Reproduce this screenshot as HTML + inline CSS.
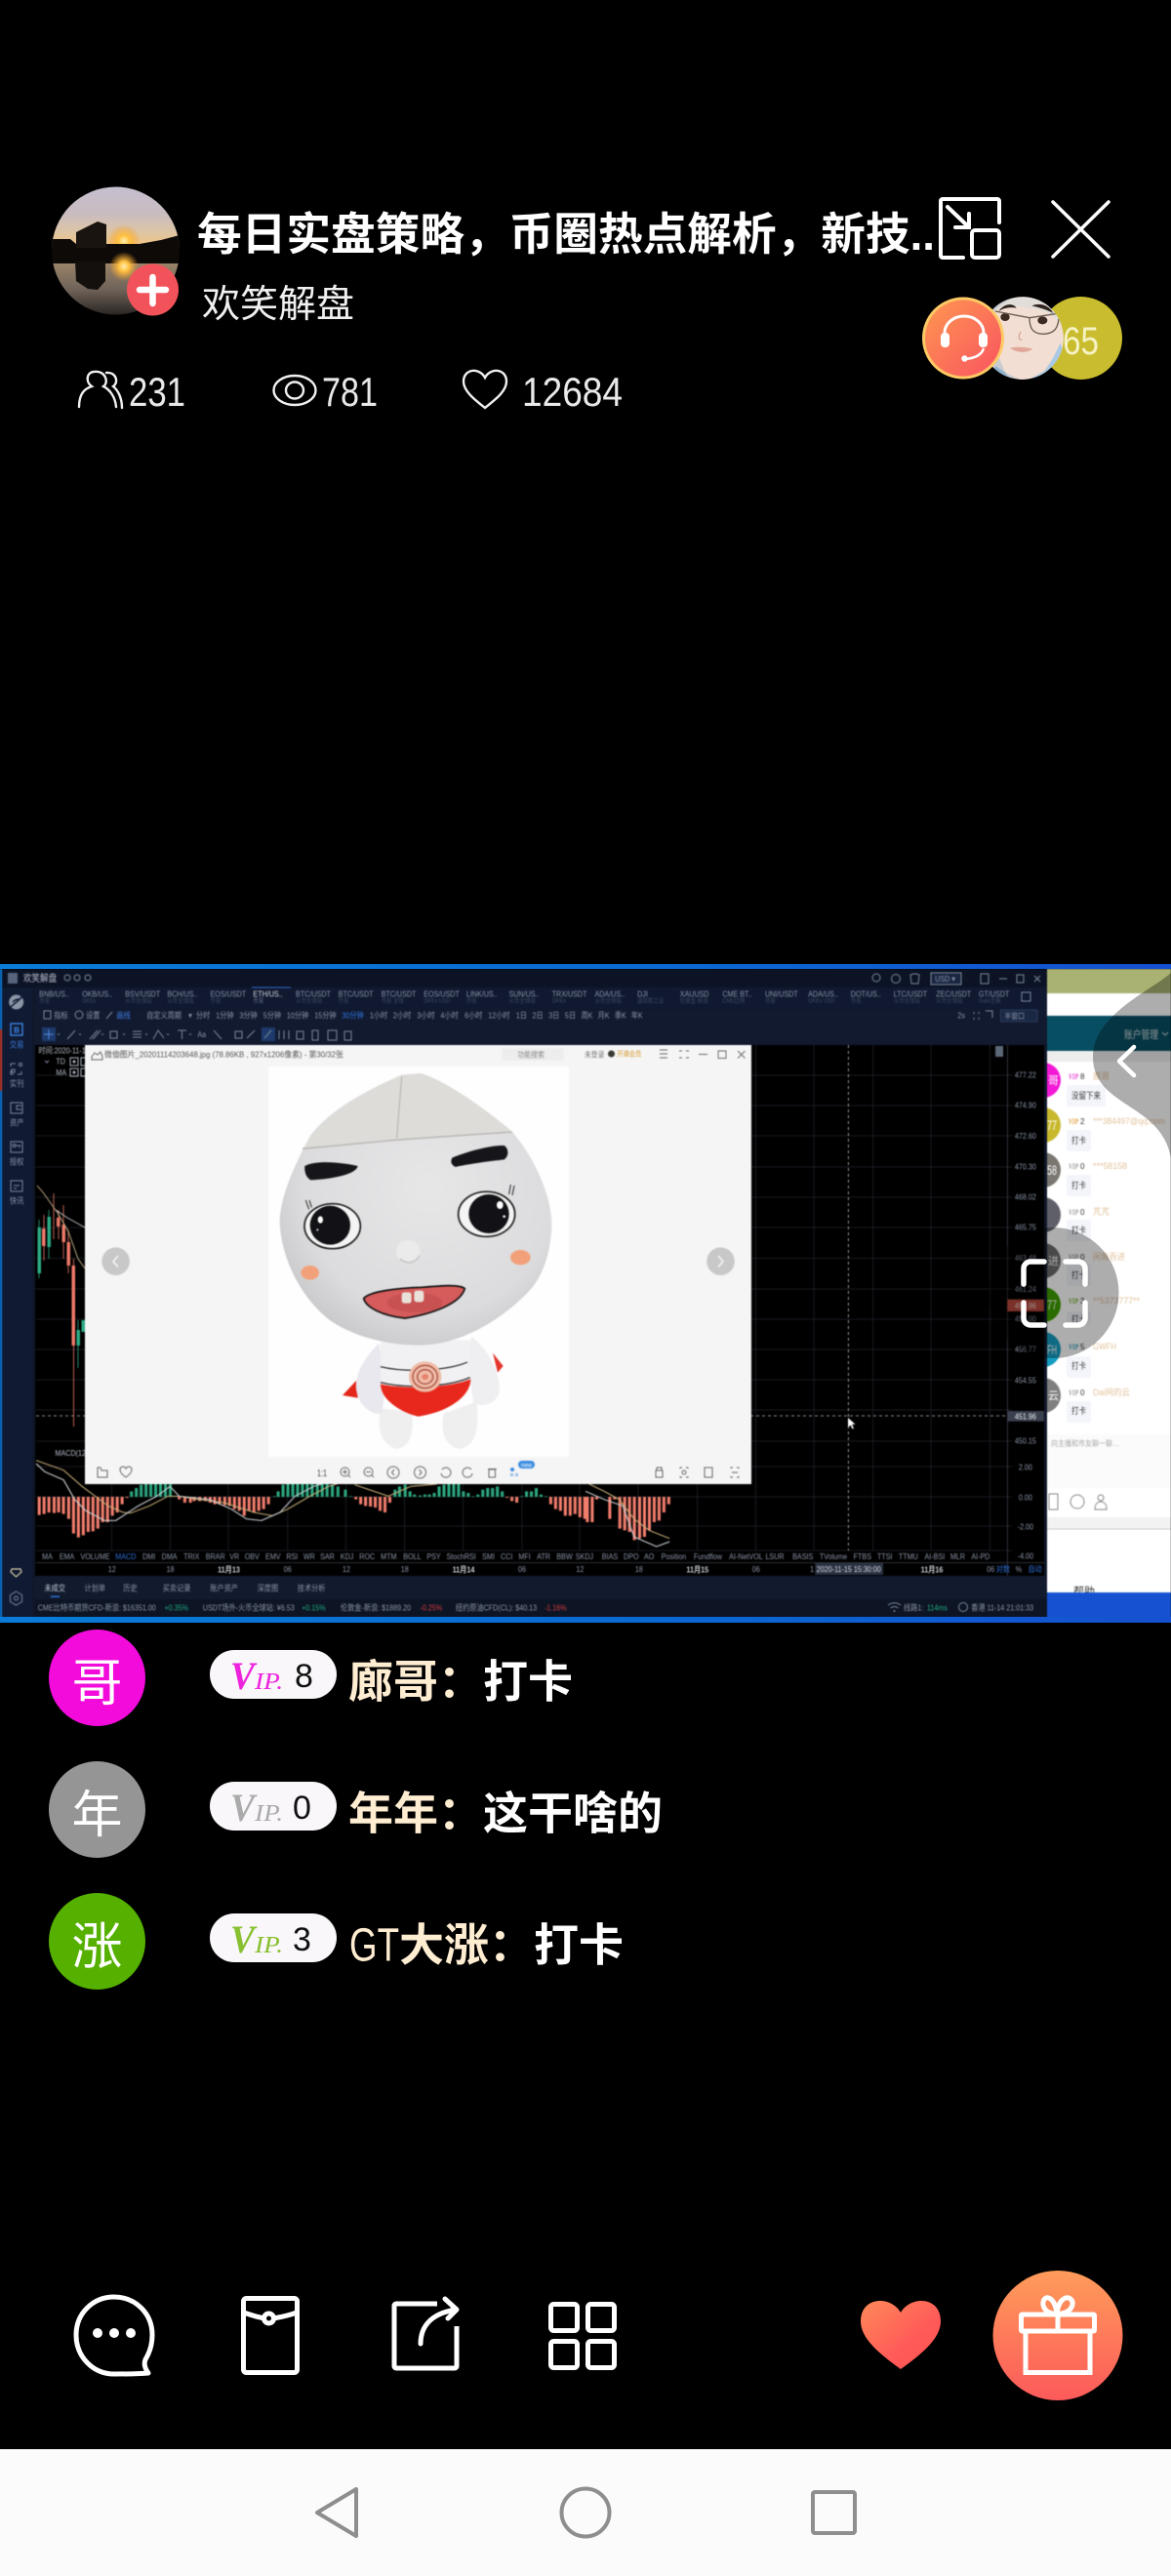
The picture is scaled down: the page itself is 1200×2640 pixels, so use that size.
<!DOCTYPE html>
<html lang="zh">
<head>
<meta charset="utf-8">
<title>欢笑解盘</title>
<style>
html,body{margin:0;padding:0;background:#000;}
body{width:1200px;height:2640px;overflow:hidden;position:relative;}
svg{position:absolute;left:0;top:0;display:block;}
text{font-family:"Liberation Sans","Noto Sans CJK SC",sans-serif;}
.sv text{font-family:"Liberation Serif","Noto Serif CJK SC",serif;font-style:italic;}
.lb text{font-size:25px;fill:#8b95a8;}
.dim text{font-size:19px;fill:#3d4a62;}
.mid text{text-anchor:middle;}
.ic{fill:none;stroke:#7d889c;stroke-width:1;}
.vi{fill:none;stroke:#666;stroke-width:1;}
.p text{font-size:9px;fill:#333;}
</style>
</head>
<body>
<svg width="1200" height="2640" viewBox="0 0 1200 2640" xmlns="http://www.w3.org/2000/svg">
<defs>
<linearGradient id="sky" x1="0" y1="0" x2="0" y2="1">
<stop offset="0" stop-color="#c5bfcf"/><stop offset=".45" stop-color="#c9bcc0"/><stop offset=".75" stop-color="#dcc5a6"/><stop offset="1" stop-color="#f2c480"/>
</linearGradient>
<linearGradient id="water" x1="0" y1="0" x2="0" y2="1">
<stop offset="0" stop-color="#9a8468"/><stop offset=".5" stop-color="#6e6258"/><stop offset="1" stop-color="#26221f"/>
</linearGradient>
<radialGradient id="sun" cx=".5" cy=".5" r=".5"><stop offset="0" stop-color="#fff0b0"/><stop offset=".35" stop-color="#ffc040"/><stop offset="1" stop-color="#f09a2a" stop-opacity="0"/></radialGradient>
<clipPath id="av"><circle cx="118.500" cy="257" r="65.500"/></clipPath>
<clipPath id="av2"><circle cx="322.500" cy="454.500" r="127"/></clipPath>
<linearGradient id="hs" x1="0" y1="0" x2="1" y2="1"><stop offset="0" stop-color="#ff9850"/><stop offset="1" stop-color="#f85360"/></linearGradient>
<linearGradient id="ht" x1="0" y1="0" x2="1" y2="1"><stop offset="0" stop-color="#ff8a58"/><stop offset=".6" stop-color="#ff5b58"/><stop offset="1" stop-color="#ff5050"/></linearGradient>
<linearGradient id="gf" x1="0" y1="0" x2="0" y2="1"><stop offset="0" stop-color="#ff9c5a"/><stop offset="1" stop-color="#fc5a5a"/></linearGradient>
<linearGradient id="bar" x1="0" y1="0" x2="1" y2="0"><stop offset="0" stop-color="#0a7cd8"/><stop offset=".55" stop-color="#0a6ad2"/><stop offset="1" stop-color="#1550d0"/></linearGradient>
<radialGradient id="head" cx=".55" cy=".42" r=".62"><stop offset="0" stop-color="#e7e7e8"/><stop offset=".75" stop-color="#dcdcde"/><stop offset="1" stop-color="#c9c9cb"/></radialGradient>
<clipPath id="panel"><rect x="1073" y="993" width="127" height="639"/></clipPath>
</defs>

<rect width="1200" height="2640" fill="#000"/>

<!-- header avatar -->
<g clip-path="url(#av)">
<rect x="53" y="191" width="131" height="62" fill="url(#sky)"/>
<circle cx="127" cy="247" r="17" fill="url(#sun)"/>
<rect x="53" y="250" width="131" height="22" fill="#0d0a08"/>
<path d="M53 245H72L78 250V256H53ZM143 250L165 246L184 241V256H143Z" fill="#0d0a08"/>
<path d="M78 238L100 227L109 230V254H78Z" fill="#19140f"/>
<rect x="53" y="270" width="131" height="54" fill="url(#water)"/>
<circle cx="127" cy="273" r="15" fill="url(#sun)"/>
<path d="M77 268H108V288L100 297L90 296L78 288Z" fill="#14100d"/>
</g>
<circle cx="156.500" cy="297" r="26.500" fill="#f2535a"/>
<path d="M143 297H170M156.500 284V311" stroke="#fff" stroke-width="6.500" stroke-linecap="round"/>

<text x="202" y="256" font-size="46" font-weight="700" fill="#fff" textLength="756" lengthAdjust="spacingAndGlyphs">每日实盘策略，币圈热点解析，新技..</text>
<text x="207" y="325" font-size="39" fill="#f0f0f0">欢笑解盘</text>

<!-- mini-window + close -->
<path d="M987 264H966a2 2 0 0 1-2-2V206a2 2 0 0 1 2-2H1022a2 2 0 0 1 2 2V228" fill="none" stroke="#fff" stroke-width="4" stroke-linecap="round"/>
<rect x="996" y="236" width="28" height="28" rx="3" fill="none" stroke="#fff" stroke-width="4"/>
<path d="M971 212L992 232M993 219V233H979" fill="none" stroke="#fff" stroke-width="4" stroke-linecap="round"/>
<path d="M1079 207L1136 263M1136 207L1079 263" stroke="#fff" stroke-width="3.500" stroke-linecap="round"/>

<!-- audience avatars -->
<circle cx="1107.500" cy="346.500" r="42.500" fill="#c9bc2e"/>
<text x="1089" y="363" font-size="40" fill="#f5f2c4" textLength="37" lengthAdjust="spacingAndGlyphs">65</text>
<g transform="translate(940,195) scale(.33333)">
<circle cx="322.500" cy="454.500" r="127" fill="#c7ccd2"/>
<g clip-path="url(#av2)">
<path d="M232 400C240 350 290 325 340 328C400 332 440 380 450 440L450 500L415 520L390 555L330 590L270 560L245 500Z" fill="#f2ded2"/>
<path d="M232 380C260 335 320 322 365 330C410 340 440 380 445 420C430 395 410 378 390 372L290 352C265 352 245 365 232 380Z" fill="#e1ded9"/>
<path d="M440 470L450 500V590H330L395 555L420 510Z" fill="#a9c9e4"/>
<path d="M240 540L270 560L290 590H230Z" fill="#8eb0ca"/>
<path d="M250 372C265 348 295 345 305 362C285 358 265 362 250 372ZM352 355C375 345 405 352 418 378C395 365 372 360 352 355Z" fill="#2e2420"/>
<ellipse cx="270" cy="390" rx="14" ry="12" fill="#3a2a22"/><ellipse cx="385" cy="400" rx="15" ry="12" fill="#3a2a22"/>
<path d="M240 372L345 392L425 380M345 392C345 425 355 440 385 442C420 442 432 425 435 395" fill="none" stroke="#6a5a4e" stroke-width="4"/>
<path d="M318 435C310 450 310 458 322 460" fill="none" stroke="#c69a85" stroke-width="3"/>
<path d="M285 485C305 480 335 482 355 488C335 502 305 500 285 485Z" fill="#e2a79a"/>
</g>
</g>
<circle cx="987" cy="346.500" r="40.500" fill="url(#hs)" stroke="#ffc965" stroke-width="3"/>
<path d="M968 344V341a20 17 0 0 1 40 0V344" fill="none" stroke="#fff" stroke-width="3"/>
<rect x="964" y="341" width="9" height="15" rx="4" fill="#fff"/><rect x="1003" y="341" width="9" height="15" rx="4" fill="#fff"/>
<path d="M1008 357C1006 364 998 367 990 368" fill="none" stroke="#fff" stroke-width="2.500"/>
<circle cx="988.500" cy="367.500" r="3.200" fill="#fff"/>

<!-- stats -->
<g fill="none" stroke="#f0f0f0" stroke-width="2.400" stroke-linecap="round">
<path d="M81 417C81 402 88 398 94 396C88 392 88 382 96 381C108 379 112 392 106 396C112 399 118 406 119 417"/>
<path d="M109 382C119 381 122 392 116 396C121 400 125 408 125 418"/>
<ellipse cx="302" cy="400" rx="21.500" ry="15"/>
<ellipse cx="302" cy="400" rx="9" ry="8.500"/>
<path d="M497 418C487 410 475 401 475 391C475 378 491 376 497 387C503 376 519 378 519 391C519 401 507 410 497 418Z"/>
</g>
<g font-size="42" fill="#e9e9e9">
<text x="132" y="416" textLength="58" lengthAdjust="spacingAndGlyphs">231</text>
<text x="330" y="416" textLength="57" lengthAdjust="spacingAndGlyphs">781</text>
<text x="535" y="416" textLength="103" lengthAdjust="spacingAndGlyphs">12684</text>
</g>

<!-- right chat panel behind video window -->
<g style="filter:blur(.4px)">
<rect x="1073" y="993" width="127" height="639" fill="#fff"/>
<rect x="1073" y="993" width="127" height="25" fill="#a9b272"/>
<rect x="1073" y="1041" width="127" height="36" fill="#084e62"/>
<rect x="1073" y="1077" width="127" height="11" fill="#ededee"/>
<text x="1152" y="1064" font-size="11" fill="#d5dde0" textLength="35" lengthAdjust="spacingAndGlyphs">账户管理</text>
<path d="M1191 1058l3 3 3-3" fill="none" stroke="#c5d0d5" stroke-width="1"/>
<g clip-path="url(#panel)" fill="#fff">
<circle cx="1069" cy="1107" r="18" fill="#f318d6"/>
<circle cx="1069" cy="1153" r="18" fill="#c8b82c"/>
<circle cx="1069" cy="1199" r="18" fill="#7a7670"/>
<circle cx="1069" cy="1245" r="18" fill="#5e5f68"/>
<circle cx="1069" cy="1292" r="18" fill="#6c6c6c"/>
<circle cx="1069" cy="1337" r="18" fill="#3ea000"/>
<circle cx="1069" cy="1383" r="18" fill="#169cc0"/>
<circle cx="1069" cy="1430" r="18" fill="#7f7f7f"/>
<g font-size="11"><text x="1074" y="1111">哥</text><text x="1074" y="1296">进</text><text x="1074" y="1434">云</text></g>
<g font-size="14"><text x="1073" y="1158" textLength="10" lengthAdjust="spacingAndGlyphs">77</text><text x="1073" y="1204" textLength="10" lengthAdjust="spacingAndGlyphs">58</text><text x="1073" y="1342" textLength="10" lengthAdjust="spacingAndGlyphs">77</text><text x="1073" y="1388" textLength="10" lengthAdjust="spacingAndGlyphs">FH</text></g>
</g>
<g fill="#f3f5fb">
<rect x="1093" y="1112" width="40" height="22" rx="2"/><rect x="1093" y="1158" width="25" height="22" rx="2"/><rect x="1093" y="1204" width="25" height="22" rx="2"/><rect x="1093" y="1250" width="25" height="22" rx="2"/><rect x="1093" y="1296" width="25" height="22" rx="2"/><rect x="1093" y="1344" width="25" height="14" rx="2"/><rect x="1093" y="1390" width="25" height="22" rx="2"/><rect x="1093" y="1436" width="25" height="22" rx="2"/>
</g>
<g class="p">
<text x="1098" y="1126" textLength="30" lengthAdjust="spacingAndGlyphs">没留下来</text>
<text x="1098" y="1172" textLength="15" lengthAdjust="spacingAndGlyphs">打卡</text>
<text x="1098" y="1218" textLength="15" lengthAdjust="spacingAndGlyphs">打卡</text>
<text x="1098" y="1264" textLength="15" lengthAdjust="spacingAndGlyphs">打卡</text>
<text x="1098" y="1310" textLength="15" lengthAdjust="spacingAndGlyphs">打卡</text>
<text x="1098" y="1355" textLength="15" lengthAdjust="spacingAndGlyphs">打卡</text>
<text x="1098" y="1403" textLength="15" lengthAdjust="spacingAndGlyphs">打卡</text>
<text x="1098" y="1449" textLength="15" lengthAdjust="spacingAndGlyphs">打卡</text>
</g>
<g font-size="9" fill="#e3c39c">
<text x="1120" y="1106" textLength="17" lengthAdjust="spacingAndGlyphs">廊哥</text>
<text x="1120" y="1152" textLength="74" lengthAdjust="spacingAndGlyphs">***384497@qq.com</text>
<text x="1120" y="1198" textLength="35" lengthAdjust="spacingAndGlyphs">***58158</text>
<text x="1120" y="1245" textLength="17" lengthAdjust="spacingAndGlyphs">芃芃</text>
<text x="1120" y="1291" textLength="33" lengthAdjust="spacingAndGlyphs">闲角吞进</text>
<text x="1120" y="1336" textLength="48" lengthAdjust="spacingAndGlyphs">**5373777**</text>
<text x="1120" y="1383" textLength="24" lengthAdjust="spacingAndGlyphs">GWFH</text>
<text x="1120" y="1430" textLength="38" lengthAdjust="spacingAndGlyphs">Dai网的云</text>
</g>
<g class="sv" font-weight="700">
<text x="1095" y="1106" font-size="8" fill="#e83fd0" textLength="10" lengthAdjust="spacingAndGlyphs">VIP</text><text x="1095" y="1152" font-size="8" fill="#e0a040" textLength="10" lengthAdjust="spacingAndGlyphs">VIP</text><text x="1095" y="1198" font-size="8" fill="#999" textLength="10" lengthAdjust="spacingAndGlyphs">VIP</text><text x="1095" y="1245" font-size="8" fill="#999" textLength="10" lengthAdjust="spacingAndGlyphs">VIP</text><text x="1095" y="1291" font-size="8" fill="#999" textLength="10" lengthAdjust="spacingAndGlyphs">VIP</text><text x="1095" y="1336" font-size="8" fill="#7ab030" textLength="10" lengthAdjust="spacingAndGlyphs">VIP</text><text x="1095" y="1383" font-size="8" fill="#30a0c0" textLength="10" lengthAdjust="spacingAndGlyphs">VIP</text><text x="1095" y="1430" font-size="8" fill="#999" textLength="10" lengthAdjust="spacingAndGlyphs">VIP</text>
</g>
<g font-size="8" fill="#333">
<text x="1107" y="1106">8</text><text x="1107" y="1152">2</text><text x="1107" y="1198">0</text><text x="1107" y="1245">0</text><text x="1107" y="1291">0</text><text x="1107" y="1336">3</text><text x="1107" y="1383">5</text><text x="1107" y="1430">0</text>
</g>
<rect x="1073" y="1470" width="127" height="55" fill="#fbfbfb"/>
<text x="1077" y="1482" font-size="8" fill="#aaa" textLength="70" lengthAdjust="spacingAndGlyphs">向主播和市友聊一聊…</text>
<rect x="1075" y="1531" width="9" height="16" fill="none" stroke="#888"/>
<circle cx="1104" cy="1539" r="7" fill="none" stroke="#888"/>
<circle cx="1128" cy="1535" r="3" fill="none" stroke="#888"/>
<path d="M1122 1547c0-6 3-8 6-8s6 2 6 8z" fill="none" stroke="#888"/>
<rect x="1073" y="1555" width="127" height="12" fill="#f2f2f2"/>
<rect x="1073" y="1566.500" width="127" height="1" fill="#ccc"/>
<g clip-path="url(#panel)"><text x="1100" y="1635" font-size="11.500" fill="#333" textLength="22" lengthAdjust="spacingAndGlyphs">帮助</text></g>
<rect x="1073" y="1632" width="127" height="26" fill="#1452d2"/>

<!-- video window -->
<rect x="0" y="993" width="1073" height="665" fill="#0f1729"/>
<rect x="2" y="993" width="31" height="665" fill="#101a33"/>
<rect x="2" y="993" width="1071" height="19" fill="#0c1325"/>
<rect x="36" y="1012" width="1037" height="24" fill="#101930"/>
<rect x="36" y="1036" width="1037" height="35" fill="#121a30"/>
<rect x="36" y="1071" width="1034" height="544" fill="#000"/>
<rect x="36" y="1615" width="1037" height="24" fill="#121a2e"/>
<rect x="36" y="1639" width="1037" height="19" fill="#0d1424"/>
<rect x="0" y="993" width="2" height="665" fill="#0a78d8"/>
<rect x="0" y="1055" width="2" height="63" fill="#c0392b"/>

<!-- grid -->
<path d="M37 1102H1037M37 1133H1037M37 1164H1037M37 1196H1037M37 1227H1037M37 1258H1037M37 1289.500H1037M37 1321H1037M37 1352H1037M37 1383H1037M37 1414H1037M37 1445H1037M37 1477H1037M37 1503H1037M37 1534H1037M37 1564H1037M37 1589H1037" stroke="#23262e" stroke-width=".8"/>
<path d="M114.400 1071V1589M174.500 1071V1589M234 1071V1589M294.700 1071V1589M354.400 1071V1589M414.500 1071V1589M474.500 1071V1589M535 1071V1589M594 1071V1589M654 1071V1589M714.400 1071V1589M774.500 1071V1589M834 1071V1589M894.700 1071V1589M954 1071V1589M1014.500 1071V1589" stroke="#1f2229" stroke-width=".8"/>
<path d="M1032.500 1071V1615" stroke="#3a3f4a" stroke-width=".8"/>
<path d="M37 1601.600H1070" stroke="#3a3f4a" stroke-width=".8"/>
<path d="M869.400 1071V1589M37 1451H1032" stroke="#bbb" stroke-width=".8" stroke-dasharray="3 3"/>

<!-- candles -->
<g fill="#f07a6a" stroke="#f07a6a">
<path d="M45 1245V1292M55 1223V1270M60 1240V1270M65 1235V1290M70 1260V1305M75.500 1290V1462" stroke-width=".8" fill="none"/>
<rect x="43" y="1259" width="3.500" height="18" stroke="none"/><rect x="58" y="1248" width="3.500" height="9" stroke="none"/><rect x="63.500" y="1255" width="3.500" height="18" stroke="none"/><rect x="68.500" y="1273" width="3.500" height="24" stroke="none"/><rect x="73.500" y="1297" width="3.500" height="82" stroke="none"/>
</g>
<g fill="#2cab85" stroke="#2cab85">
<path d="M40 1250V1310M50 1240V1290M80 1353V1402" stroke-width=".8" fill="none"/>
<rect x="38.500" y="1258" width="3.500" height="47" stroke="none"/><rect x="48.500" y="1247" width="3.500" height="31" stroke="none"/><rect x="78.500" y="1363" width="3.500" height="16" stroke="none"/><rect x="83.500" y="1353" width="3.500" height="12" stroke="none"/>
</g>
<path d="M38 1215L44 1222L59 1243L70 1262L80 1290L87 1300" fill="none" stroke="#c8b48a" stroke-width=".9"/>
<path d="M57 1240L69 1248L87 1258" fill="none" stroke="#c8ccd2" stroke-width=".8"/>

<!-- MACD bars -->
<g transform="translate(0,1320) scale(.38265,.33333)" fill="none" stroke-width="8">
<path stroke="#f47e6e" d="M105 642V698M118 642V695M131 642V690M145 642V692M157 642V690M170 642V695M184 642V710M197 642V755M210 642V767M223 642V760M236 642V750M249 642V748M262 642V740M275 642V720M288 642V720M301 642V700M314 642V690M327 642V665M340 642V645M480 642V650M495 642V660M510 642V660M520 642V655M535 642V655M550 642V655M563 642V660M575 642V665M588 642V665M602 642V668M615 642V670M628 642V680M641 642V685M654 642V700M667 642V685M680 642V690M693 642V685M706 642V680M719 642V665M953 642V650M966 642V665M979 642V670M992 642V672M1005 642V675M1018 642V685M1031 642V690M1044 642V660M1358 642V645M1371 642V655M1384 642V660M1475 642V665M1488 642V680M1501 642V685M1514 642V700M1527 642V700M1540 642V695M1553 642V705M1566 642V710"/>
<path stroke="#2ca880" d="M352 642V625M365 642V615M378 642V605M391 642V603M404 642V603M417 642V603M430 642V603M443 642V603M456 642V603M735 642V640M745 642V625M758 642V605M771 642V603M784 642V603M797 642V603M810 642V603M823 642V603M836 642V603M850 642V603M863 642V603M876 642V603M890 642V605M905 642V610M925 642V620M940 642V640M1058 642V620M1070 642V610M1085 642V605M1098 642V625M1110 642V635M1125 642V638M1138 642V635M1150 642V635M1163 642V630M1176 642V610M1189 642V605M1202 642V603M1215 642V603M1228 642V603M1241 642V625M1254 642V630M1267 642V640M1280 642V635M1293 642V620M1306 642V615M1319 642V615M1332 642V610M1345 642V625M1397 642V640M1410 642V625M1423 642V625M1436 642V615M1449 642V635M1462 642V640"/>
<path stroke="#c9b078" stroke-width="3" d="M97 530L170 560L220 610L290 670L330 690L350 692L400 670L450 640L480 640L530 650L600 660L680 690L730 700L770 680L830 640L880 610L910 600M950 605L1040 640L1100 610L1170 603"/>
<path stroke="#cfd3d8" stroke-width="3" d="M97 540L120 565L170 590L200 650L230 685L280 715L310 715L370 670L420 640L455 610L480 640L560 650L620 680L660 710L700 715L750 690L790 640L840 610L870 600"/>
</g>
<g transform="translate(600,1320) scale(.38265,.33333)" fill="none" stroke-width="8">
<path stroke="#f47e6e" d="M5 642V720M18 642V720M30 642V650M65 642V710M78 642V650M92 642V740M105 642V745M118 642V750M131 642V775M145 642V770M158 642V765M171 642V745M184 642V720M197 642V715M210 642V690M223 642V665"/>
<path stroke="#c9b078" stroke-width="3" d="M10 603L50 625L90 650L130 710L170 745L225 770"/>
<path stroke="#cfd3d8" stroke-width="3" d="M0 625L50 650L100 670L130 765L190 795L225 780"/>
</g>

<!-- sidebar icons -->
<circle cx="16.700" cy="1027" r="7.500" fill="#8d96a8"/><path d="M11 1032C15 1028 19 1026 23 1021M13 1027C16 1024 18 1024 20 1024" stroke="#101a33" stroke-width="1.500" fill="none"/>
<rect x="11" y="1049" width="12" height="12" fill="none" stroke="#3e8bf0" stroke-width="1.300"/>
<text x="17" y="1058.500" font-size="8" font-weight="700" fill="#3e8bf0" text-anchor="middle">B</text>
<g class="ic" stroke-width="1.200">
<path d="M11 1093v-3h5M11 1097v4h3M22 1098v3h-4"/><circle cx="21" cy="1091" r="1.500"/><rect x="12" y="1096" width="3" height="3"/>
<rect x="11" y="1130" width="12" height="11"/><path d="M22 1133h-5v4h5"/>
<rect x="11" y="1170" width="12" height="11"/><circle cx="14.500" cy="1174" r="1.500"/><path d="M16 1174h5M20 1174v2"/>
<rect x="11" y="1210" width="12" height="11"/><path d="M14 1215h6M14 1218h3"/>
</g>
<path d="M12 1608h9l1 3-5.500 5-5.500-5z" fill="none" stroke="#d7c9a8" stroke-width="1.200"/>
<path d="M16.500 1631l6 3.500v7l-6 3.500-6-3.500v-7z" class="ic"/><circle cx="16.500" cy="1638" r="2" class="ic"/>

<!-- toolbar glyphs -->
<rect x="43" y="1053" width="14" height="14" fill="#1e3a6c"/>
<rect x="268" y="1053" width="14" height="14" fill="#1e3a6c"/>
<path d="M50 1055V1065M45 1060H55" stroke="#4f8de0" stroke-width="1"/>
<path d="M58.500 1059.500h3l-1.500 1.500zM80.500 1059.500h3l-1.500 1.500zM103.500 1059.500h3l-1.500 1.500zM125.500 1059.500h3l-1.500 1.500zM148.500 1059.500h3l-1.500 1.500zM170.500 1059.500h3l-1.500 1.500zM193.500 1059.500h3l-1.500 1.500z" fill="#7d889c"/>
<g class="ic">
<path d="M69 1065L77 1056M92 1065L100 1056M95 1065L103 1056"/><rect x="113" y="1057" width="7" height="7"/><path d="M136 1057H145M136 1060H145M136 1063H145M157 1065L162 1056L168 1064M182 1056H191M186.500 1056V1065"/>
<path d="M219 1056L227 1065M241 1057h7v7h-7zM253 1064l8-8M271 1064l7-8"/><path d="M286 1056v9M291 1056v9M296 1056v9"/><rect x="304" y="1057" width="7" height="8"/><rect x="320" y="1056" width="6" height="10"/><rect x="336" y="1056" width="9" height="10"/><rect x="353" y="1057" width="7" height="9"/>
<rect x="45" y="1036" width="7" height="8"/><circle cx="81" cy="1040" r="4"/><path d="M109 1044l6-7"/>
<circle cx="898" cy="1002" r="4"/><circle cx="918" cy="1003" r="4.500"/><path d="M933 999l3-1h3l3 1-1 9h-7z"/><rect x="954" y="997" width="31" height="12" fill="#1a2640"/><rect x="1005" y="998" width="8" height="10"/><path d="M1024 1003H1032"/><rect x="1042" y="999" width="7" height="8"/><path d="M1060 1000l6 6M1066 1000l-6 6"/>
<rect x="1025.500" y="1035" width="37.500" height="12" fill="#1a2844" stroke="#2a3a5a"/><path d="M998 1037v2M1003 1037v2M998 1043v2M1003 1043v2M1010 1036h7v7"/>
<rect x="1047" y="1017" width="9" height="9"/>
<rect x="8" y="997" width="10" height="11" fill="#58647c" stroke="none"/>
<circle cx="69" cy="1002" r="3"/><circle cx="79" cy="1002" r="3"/><circle cx="90" cy="1002" r="3"/>
</g>
<path d="M258 1012H298" stroke="#2e6bd0" stroke-width="1"/>
<path d="M46 1087l2 2 2-2" class="ic"/>
<g fill="none" stroke="#aab0bb" stroke-width="1"><rect x="72" y="1084" width="8" height="8"/><rect x="72" y="1095" width="8" height="8"/><rect x="83" y="1084" width="5" height="8"/><rect x="83" y="1095" width="5" height="8"/></g>
<circle cx="76" cy="1088" r="1.500" fill="#aab0bb"/><circle cx="76" cy="1099" r="1.500" fill="#aab0bb"/>

<!-- text labels in video -->
<g transform="translate(0,980) scale(.28699,.33333)">
<text x="83" y="78" font-size="30" fill="#b9c2d0">欢笑解盘</text>
<g class="lb">
<text x="140" y="124">BNB/US..</text><text x="293" y="124">OKB/US..</text><text x="447" y="124">BSV/USDT</text><text x="597" y="124">BCH/US..</text><text x="751" y="124">EOS/USDT</text><text x="904" y="124" style="fill:#d7dce4">ETH/US..</text><text x="1056" y="124">BTC/USDT</text><text x="1208" y="124">BTC/USDT</text><text x="1361" y="124">BTC/USDT</text><text x="1513" y="124">EOS/USDT</text><text x="1665" y="124">LINK/US..</text><text x="1817" y="124">SUN/US..</text><text x="1971" y="124">TRX/USDT</text>
<text x="193" y="190">指标</text><text x="307" y="190">设置</text><text x="416" y="190" style="fill:#3e7fe0">画线</text><text x="523" y="190">自定义周期</text><text x="673" y="190">▾</text><text x="700" y="190">分时</text><text x="771" y="190">1分钟</text><text x="855" y="190">3分钟</text><text x="940" y="190">5分钟</text><text x="1024" y="190">10分钟</text><text x="1123" y="190">15分钟</text><text x="1221" y="190" style="fill:#2f74e0">30分钟</text><text x="1320" y="190">1小时</text><text x="1404" y="190">2小时</text><text x="1489" y="190">3小时</text><text x="1573" y="190">4小时</text><text x="1659" y="190">6小时</text><text x="1743" y="190">12小时</text><text x="1843" y="190">1日</text><text x="1901" y="190">2日</text><text x="1959" y="190">3日</text><text x="2017" y="190">5日</text><text x="2075" y="190">周K</text>
<text x="705" y="249">Aa</text>
<text x="137" y="298" style="fill:#b6bcc8">时间:2020-11-1</text><text x="200" y="332" style="fill:#b6bcc8">TD</text><text x="200" y="366" style="fill:#b6bcc8">MA</text>
</g>
<g class="dim">
<text x="140" y="142">币安</text><text x="293" y="142">OKEx</text><text x="447" y="142">火币全球站</text><text x="597" y="142">火币全球站</text><text x="751" y="142">币安</text><text x="904" y="142" style="fill:#66718a">币安</text><text x="1056" y="142">火币全球站</text><text x="1208" y="142">币安</text><text x="1361" y="142">币安 全球</text><text x="1513" y="142">OKEx USD</text><text x="1665" y="142">币安</text><text x="1817" y="142">火币全球站</text><text x="1971" y="142">OKEx</text>
</g>
<g class="lb mid">
<text x="60" y="280" style="fill:#3d7fe0;font-size:25px">交易</text><text x="60" y="400">实刊</text><text x="60" y="520">资产</text><text x="60" y="640">授权</text><text x="60" y="760">快讯</text>
</g>
</g>
<g transform="translate(600,980) scale(.28699,.33333)">
<g class="lb">
<text x="33" y="124">ADA/US..</text><text x="185" y="124">DJI</text><text x="337" y="124">XAUUSD</text><text x="489" y="124">CME BT..</text><text x="641" y="124">UNI/USDT</text><text x="795" y="124">ADA/US..</text><text x="947" y="124">DOT/US..</text><text x="1100" y="124">LTC/USDT</text><text x="1252" y="124">ZEC/USDT</text><text x="1404" y="124">GT/USDT</text>
<text x="44" y="190">月K</text><text x="104" y="190">季K</text><text x="163" y="190">年K</text><text x="1329" y="190">2s</text><text x="1496" y="192" style="font-size:24px">半窗口</text><text x="1248" y="78">USD ▾</text>
</g>
<g class="dim">
<text x="33" y="142">火币全球站</text><text x="185" y="142">道琼斯工业</text><text x="337" y="142">伦敦金-新浪</text><text x="489" y="142">CME比特</text><text x="641" y="142">币安</text><text x="795" y="142">OKEx USD</text><text x="947" y="142">币安</text><text x="1100" y="142">火币全球站</text><text x="1252" y="142">火币全球站</text><text x="1404" y="142">Gate芝麻</text>
</g>
<g class="lb mid">
<text x="1571" y="373">477.22</text><text x="1571" y="467">474.90</text><text x="1571" y="561">472.60</text><text x="1571" y="655">470.30</text><text x="1571" y="748">468.02</text><text x="1571" y="842">465.75</text><text x="1571" y="936">463.48</text>
</g>
</g>
<g transform="translate(0,1320) scale(.28699,.33333)">
<text x="197" y="516" font-size="25" fill="#b6bcc8">MACD(12</text>
<g class="lb mid">
<text x="169" y="834">MA</text><text x="239" y="834">EMA</text><text x="340" y="834">VOLUME</text><text x="449" y="834" style="fill:#2f6fd8">MACD</text><text x="532" y="834">DMI</text><text x="605" y="834">DMA</text><text x="684" y="834">TRIX</text><text x="769" y="834">BRAR</text><text x="837" y="834">VR</text><text x="900" y="834">OBV</text><text x="975" y="834">EMV</text><text x="1043" y="834">RSI</text><text x="1104" y="834">WR</text><text x="1169" y="834">SAR</text><text x="1239" y="834">KDJ</text><text x="1311" y="834">ROC</text><text x="1388" y="834">MTM</text><text x="1472" y="834">BOLL</text><text x="1549" y="834">PSY</text><text x="1647" y="834">StochRSI</text><text x="1744" y="834">SMI</text><text x="1809" y="834">CCI</text><text x="1873" y="834">MFI</text><text x="1941" y="834">ATR</text><text x="2016" y="834">BBW</text><text x="2087" y="834">SKDJ</text>
<text x="400" y="873">12</text><text x="608" y="873">18</text><text x="817" y="874" style="fill:#c9cdd4;font-weight:700">11月13</text><text x="1027" y="873">06</text><text x="1237" y="873">12</text><text x="1445" y="873">18</text><text x="1655" y="874" style="fill:#c9cdd4;font-weight:700">11月14</text><text x="1864" y="873">06</text><text x="2071" y="873">12</text>
<text x="196" y="931" style="fill:#c5cbd6">未成交</text><text x="339" y="931">计划单</text><text x="465" y="931">历史</text><text x="631" y="931">买卖记录</text><text x="800" y="931">账户资产</text><text x="956" y="931">深度图</text><text x="1112" y="931">技术分析</text>
</g>
<g class="lb" style="font-size:24px">
<text x="135" y="991">CME比特币期货CFD-新浪: $16351.00</text><text x="587" y="991" style="fill:#1fa97d">+0.35%</text><text x="724" y="991">USDT场外-火币全球站: ¥6.53</text><text x="1077" y="991" style="fill:#1fa97d">+0.15%</text><text x="1216" y="991">伦敦金-新浪: $1889.20</text><text x="1500" y="991" style="fill:#d63b3b">-0.25%</text><text x="1627" y="991">纽约原油CFD(CL): $40.13</text><text x="1944" y="991" style="fill:#d63b3b">-1.16%</text>
</g>
</g>
<rect x="52" y="1635.500" width="9" height="1.500" fill="#2e72d8"/>
<g transform="translate(600,1320) scale(.28699,.33333)">
<rect x="820" y="846" width="243" height="36" fill="#2a3140"/>
<rect x="1506" y="35" width="131" height="37" fill="#b5473c"/>
<rect x="1506" y="378" width="131" height="32" fill="#3a404e"/>
<g class="lb mid">
<text x="87" y="834">BIAS</text><text x="163" y="834">DPO</text><text x="227" y="834">AO</text><text x="315" y="834">Position</text><text x="437" y="834">Fundflow</text><text x="573" y="834">AI-NetVOL</text><text x="676" y="834">LSUR</text><text x="776" y="834">BASIS</text><text x="885" y="834">TVolume</text><text x="989" y="834">FTBS</text><text x="1069" y="834">TTSI</text><text x="1153" y="834">TTMU</text><text x="1247" y="834">AI-BSI</text><text x="1329" y="834">MLR</text><text x="1411" y="834">AI-PD</text>
<text x="191" y="873">18</text><text x="400" y="874" style="fill:#c9cdd4;font-weight:700">11月15</text><text x="609" y="873">06</text><text x="809" y="873">1</text><text x="940" y="873" style="fill:#d8dce2">2020-11-15 15:30:00</text><text x="1237" y="874" style="fill:#c9cdd4;font-weight:700">11月16</text><text x="1447" y="873">06</text><text x="1491" y="873" style="fill:#2f6fd8">对数</text><text x="1547" y="873">%</text><text x="1605" y="873" style="fill:#2f6fd8">自动</text>
<text x="1571" y="12">461.24</text><text x="1571" y="63" style="fill:#e8d8d4">459.96</text><text x="1571" y="103">459.00</text><text x="1571" y="197">456.77</text><text x="1571" y="292">454.55</text><text x="1571" y="403" style="fill:#eee">451.96</text><text x="1571" y="479">450.15</text><text x="1571" y="559">2.00</text><text x="1571" y="652">0.00</text><text x="1571" y="742">-2.00</text><text x="1571" y="832">-4.00</text>
</g>
<g class="lb" style="font-size:24px">
<text x="1136" y="991">线路1:</text><text x="1219" y="991" style="fill:#1fa97d">114ms</text><text x="1377" y="991">香港 11-14 21:01:33</text>
</g>
</g>
<path d="M910 1645c4-3 9-3 13 0M912.500 1648c3-2 5-2 8 0" class="ic"/><circle cx="916.500" cy="1651" r="1" fill="#7d889c"/>
<circle cx="987" cy="1647" r="4.500" class="ic"/>
<rect x="1020" y="1072" width="8" height="11" fill="#5d6878"/>
<path d="M869 1453v10l2.500-2.500 2 4 1.500-.8-2-4h3.500z" fill="#fff"/>

<!-- photo viewer -->
<rect x="87" y="1071" width="683" height="450" fill="#f5f5f5"/>
<path d="M94 1083l3-4 3 2 3-3 2 5v3h-11z" class="vi"/>
<g transform="translate(0,980) scale(.28699,.33333)">
<text x="373" y="311" font-size="26" fill="#565656" textLength="853" lengthAdjust="spacingAndGlyphs">微信图片_20201114203648.jpg (78.86KB , 927x1206像素) - 第30/32张</text>
<rect x="1793" y="283" width="220" height="37" rx="4" fill="#ededed"/>
<text x="1848" y="311" font-size="24" fill="#888">功能搜索</text>
</g>
<g transform="translate(600,980) scale(.28699,.33333)">
<text x="-4" y="311" font-size="24" fill="#777">未登录</text>
<text x="112" y="308" font-size="22" fill="#d89a30">开通会员</text>
</g>
<circle cx="626.500" cy="1080" r="3.500" fill="#3a3a32"/>
<circle cx="120" cy="1080.500" r="2.500" fill="none" stroke="#999" stroke-width=".8"/>
<path d="M676 1076h8M676 1080h8M676 1084h8M696 1077l3 0M703 1077h3M696 1084h3M703 1084h3M716 1080.500h9M736 1077h8v7.500h-8zM756 1077l7.500 7.500M763.500 1077l-7.500 7.500" fill="none" stroke="#666" stroke-width=".9"/>
<circle cx="118.600" cy="1292.700" r="14.300" fill="#c8c8c8"/>
<circle cx="738.500" cy="1292.700" r="14.300" fill="#c8c8c8"/>
<path d="M121 1287l-5 5.700 5 5.700M736 1287l5 5.700-5 5.700" fill="none" stroke="#fff" stroke-width="1.300"/>

<!-- mascot -->
<rect x="275.500" y="1093" width="307.500" height="400" fill="#fefefe"/>
<g transform="translate(275,1090) scale(.33333)">
<path d="M270 975L228 1020L275 1028Z" fill="#e3261b"/>
<path d="M690 890L722 930L705 950Z" fill="#e3352a"/>
<path d="M345 1060C335 1110 340 1170 395 1185C440 1180 450 1120 440 1070Z" fill="#f0eff0"/>
<path d="M540 1075C525 1130 545 1180 590 1185C640 1175 650 1110 640 1040Z" fill="#f0eff0"/>
<path d="M340 860C300 900 265 950 270 1000C275 1050 320 1085 350 1075L360 980Z" fill="#e8e8ee"/>
<path d="M625 840C680 880 715 960 710 1010C700 1050 650 1060 630 1040L610 900Z" fill="#efeff2"/>
<path d="M345 850H620V990H345Z" fill="#f1f1f3"/>
<path d="M345 985C400 1000 550 1000 622 970C622 1020 560 1070 460 1085C400 1070 345 1030 345 985Z" fill="#e8281c"/>
<path d="M345 932C420 950 550 945 612 918M345 980C420 1000 550 995 620 965" fill="none" stroke="#222" stroke-width="3.500"/>
<ellipse cx="482" cy="963" rx="50" ry="47" fill="#efbca8"/>
<ellipse cx="482" cy="963" rx="38" ry="35" fill="none" stroke="#a85040" stroke-width="4"/>
<ellipse cx="482" cy="963" rx="24" ry="22" fill="none" stroke="#a85040" stroke-width="4"/>
<ellipse cx="482" cy="963" rx="10" ry="9" fill="#e8806a"/>
<path d="M410 35C330 70 200 130 130 220C70 330 35 420 35 490C40 600 100 720 190 790C280 850 400 870 480 865C600 860 730 780 810 690C860 630 875 530 870 470C860 380 810 280 750 210C680 150 560 60 470 30Z" fill="url(#head)"/>
<path d="M410 35C330 70 200 130 105 262L390 235L750 210C680 150 560 60 470 30Z" fill="#dedcd9"/>
<path d="M105 262L390 235L750 210" fill="none" stroke="#b5b3b0" stroke-width="4"/>
<path d="M410 40L395 228" fill="none" stroke="#bdbbb7" stroke-width="4"/>
<path d="M112 315C150 295 230 305 275 315C270 340 200 355 130 358C115 350 110 330 112 315Z" fill="#16161a"/>
<path d="M565 290C610 270 690 250 725 252C740 262 740 285 725 295C680 300 610 310 575 318C560 310 560 300 565 290Z" fill="#16161a"/>
<ellipse cx="197" cy="500" rx="86" ry="69" fill="#f4f4f4" stroke="#1c1c1c" stroke-width="5"/>
<ellipse cx="190" cy="497" rx="62" ry="60" fill="#121216"/>
<ellipse cx="160" cy="480" rx="8" ry="11" fill="#fff"/><circle cx="151" cy="511" r="3" fill="#fff"/>
<ellipse cx="671" cy="463" rx="87" ry="69" fill="#f4f4f4" stroke="#1c1c1c" stroke-width="5"/>
<ellipse cx="678" cy="462" rx="62" ry="60" fill="#121216"/>
<ellipse cx="712" cy="435" rx="10" ry="12" fill="#fff"/><circle cx="725" cy="470" r="4" fill="#fff"/>
<path d="M115 420L125 448M126 420L133 442M745 372L740 402M756 375L750 405" stroke="#222" stroke-width="3" fill="none"/>
<ellipse cx="430" cy="578" rx="37" ry="35" fill="#ebebeb"/>
<path d="M405 600C425 618 450 615 465 590" fill="none" stroke="#c6c6c6" stroke-width="5"/>
<ellipse cx="128" cy="643" rx="28" ry="22" fill="#f2a07a"/>
<ellipse cx="775" cy="596" rx="31" ry="23" fill="#f2a07a"/>
<path d="M293 722C310 700 400 690 470 688C530 683 590 678 604 692C590 740 500 770 420 783C350 775 300 750 293 722Z" fill="#d65c5c" stroke="#111" stroke-width="5"/>
<ellipse cx="450" cy="735" rx="85" ry="30" fill="#b94848" opacity=".5"/>
<rect x="410" y="703" width="30" height="34" rx="8" fill="#e9e2d9"/>
<rect x="448" y="698" width="30" height="35" rx="8" fill="#e9e2d9"/>
</g>

<!-- viewer bottom toolbar -->
<g fill="none" stroke="#666" stroke-width="1">
<path d="M100 1504v10h10v-7h-6l-1-3zM129 1514c-4-3-6-5-6-8 0-3 4-4 6-1 2-3 6-2 6 1 0 3-2 5-6 8z"/>
<circle cx="353.500" cy="1508.500" r="4.500"/><path d="M351 1508.500h5M353.500 1506v5M357 1512l2 2"/>
<circle cx="377.500" cy="1508.500" r="4.500"/><path d="M375 1508.500h5M381 1512l2 2"/>
<circle cx="403" cy="1509" r="6"/><path d="M404 1506l-2.500 3 2.500 3"/>
<circle cx="430.500" cy="1509" r="6"/><path d="M429.500 1506l2.500 3-2.500 3"/>
<path d="M453 1506a5 5 0 1 1-1 4M483 1506a5 5 0 1 0 1 4"/>
<rect x="501" y="1506" width="6.500" height="8"/><path d="M500 1505.500h9"/>
<rect x="672" y="1507" width="7" height="7"/><path d="M673 1507v-3h5v3M697 1505v-1h2M703 1504h2v1M697 1513v1h2M703 1514h2v-1"/><circle cx="701" cy="1509" r="2"/><rect x="722" y="1504" width="8" height="10"/><path d="M749 1505v-1h2M755 1504h2v1M749 1513v1h2M755 1514h2v-1M750 1509h6"/>
</g>
<text x="325" y="1513" font-size="10" fill="#444" textLength="10" lengthAdjust="spacingAndGlyphs">1:1</text>
<circle cx="525" cy="1506" r="2" fill="#3c8ce0"/><rect x="523" y="1510" width="3" height="3" fill="#9cc0e8"/><rect x="528" y="1510" width="3" height="3" fill="#9cc0e8"/>
<rect x="531" y="1497" width="17" height="8" rx="4" fill="#3c8ce0"/>
<text x="539.500" y="1503.500" font-size="6" fill="#fff" text-anchor="middle">new</text>
</g>

<!-- blue frame -->
<rect x="0" y="988" width="1200" height="5" fill="url(#bar)"/>
<rect x="0" y="1657" width="1200" height="6" fill="url(#bar)"/>

<!-- overlay tab + fullscreen button -->
<path d="M1200 997C1180 1015 1120 1040 1120 1083C1120 1135 1190 1130 1200 1187Z" fill="#000" fill-opacity=".32"/>
<path d="M1162 1073L1147 1087.500L1162 1102" fill="none" stroke="#fff" stroke-width="4.500" stroke-linecap="round" stroke-linejoin="round"/>
<circle cx="1079.500" cy="1325" r="67" fill="#000" fill-opacity=".32"/>
<path d="M1049 1316V1300a7 7 0 0 1 7-7H1070M1092 1293H1105a7 7 0 0 1 7 7V1316M1112 1335V1351a7 7 0 0 1-7 7H1092M1070 1358H1056a7 7 0 0 1-7-7V1335" fill="none" stroke="#fff" stroke-width="5.500" stroke-linecap="round"/>

<!-- chat rows -->
<circle cx="99.500" cy="1719.500" r="49.500" fill="#f20bdb"/>
<circle cx="99.500" cy="1854.500" r="49.500" fill="#959595"/>
<circle cx="99.500" cy="1989.500" r="49.500" fill="#55b000"/>
<g font-size="52" fill="#fff" text-anchor="middle">
<text x="99.500" y="1743">哥</text><text x="99.500" y="1878">年</text><text x="99.500" y="2013">涨</text>
</g>
<g fill="#f9f7fa"><rect x="215" y="1691" width="130" height="50" rx="25"/><rect x="215" y="1826" width="130" height="50" rx="25"/><rect x="215" y="1961" width="130" height="50" rx="25"/></g>
<g class="sv">
<text x="236" y="1731" font-size="40" font-weight="700" fill="#ee22dd" textLength="25" lengthAdjust="spacingAndGlyphs">V</text>
<text x="261" y="1731" font-size="24" fill="#ee22dd" textLength="29" lengthAdjust="spacingAndGlyphs">IP.</text>
<text x="236" y="1866" font-size="40" font-weight="700" fill="#aaaaaa" textLength="25" lengthAdjust="spacingAndGlyphs">V</text>
<text x="261" y="1866" font-size="24" fill="#aaaaaa" textLength="29" lengthAdjust="spacingAndGlyphs">IP.</text>
<text x="236" y="2001" font-size="40" font-weight="700" fill="#88c030" textLength="25" lengthAdjust="spacingAndGlyphs">V</text>
<text x="261" y="2001" font-size="24" fill="#88c030" textLength="29" lengthAdjust="spacingAndGlyphs">IP.</text>
</g>
<g font-size="34" fill="#111">
<text x="302" y="1729">8</text><text x="300" y="1864">0</text><text x="300" y="1999">3</text>
</g>
<g font-size="46" font-weight="700">
<text x="357" y="1739.500" fill="#ffedd2">廊哥：<tspan fill="#fff">打卡</tspan></text>
<text x="357" y="1874.500" fill="#ffedd2">年年：<tspan fill="#fff">这干啥的</tspan></text>
<text x="358" y="2009.500" fill="#ffedd2"><tspan font-weight="400" font-size="48" textLength="51" lengthAdjust="spacingAndGlyphs">GT</tspan>大涨：<tspan fill="#fff">打卡</tspan></text>
</g>

<!-- bottom action bar -->
<g fill="none" stroke="#fff" stroke-width="5" stroke-linejoin="round">
<path d="M152 2432C140 2433 128 2433 117 2433C95 2433 78 2415 78 2393C78 2371 95 2354 117 2354C139 2354 156 2371 156 2393C156 2402 154 2410 149 2418C147 2423 149 2428 152 2432Z"/>
<rect x="249.500" y="2355.500" width="55" height="76" rx="3"/>
<path d="M250 2370C258 2373 266 2375 271 2376M280 2376C286 2375 296 2373 304 2370"/>
<circle cx="275.500" cy="2376" r="5"/>
<path d="M448 2361H406a2 2 0 0 0-2 2V2425a2 2 0 0 0 2 2H466a2 2 0 0 0 2-2V2384"/>
<path d="M431 2402C431 2384 442 2371 467 2367M456 2356L468 2367L459 2376" stroke-linecap="round"/>
<rect x="564.500" y="2361.500" width="27" height="27" rx="3"/><rect x="602.500" y="2361.500" width="27" height="27" rx="3"/><rect x="564.500" y="2399.500" width="27" height="27" rx="3"/><rect x="602.500" y="2399.500" width="27" height="27" rx="3"/>
</g>
<circle cx="117" cy="2391" r="5" fill="#fff"/><circle cx="100" cy="2391" r="5" fill="#fff"/><circle cx="134" cy="2391" r="5" fill="#fff"/>
<path d="M923 2428C905 2415 882 2398 882 2379C882 2364 892 2358 902 2358C911 2358 919 2363 923 2370C927 2363 935 2358 944 2358C954 2358 964 2364 964 2379C964 2398 941 2415 923 2428Z" fill="url(#ht)"/>
<circle cx="1084" cy="2393.500" r="66.500" fill="url(#gf)"/>
<g fill="none" stroke="#fff" stroke-width="5">
<rect x="1046.500" y="2372" width="75" height="17" rx="1"/>
<path d="M1051 2389V2431.500H1117V2389M1084 2372V2389"/>
<path d="M1083 2371C1074 2372 1068 2366 1069 2359C1071 2351 1081 2354 1083 2371C1085 2354 1096 2351 1099 2359C1100 2366 1093 2372 1083 2371Z"/>
</g>

<!-- system nav -->
<rect x="0" y="2510" width="1200" height="130" fill="#fbfbfb"/>
<g fill="none" stroke="#8e8e8e" stroke-width="4" stroke-linejoin="round">
<path d="M365 2551V2599L325 2575Z"/>
<circle cx="600" cy="2575" r="24.500"/>
<rect x="833" y="2554" width="43" height="42" rx="2"/>
</g>
</svg>
</body>
</html>
